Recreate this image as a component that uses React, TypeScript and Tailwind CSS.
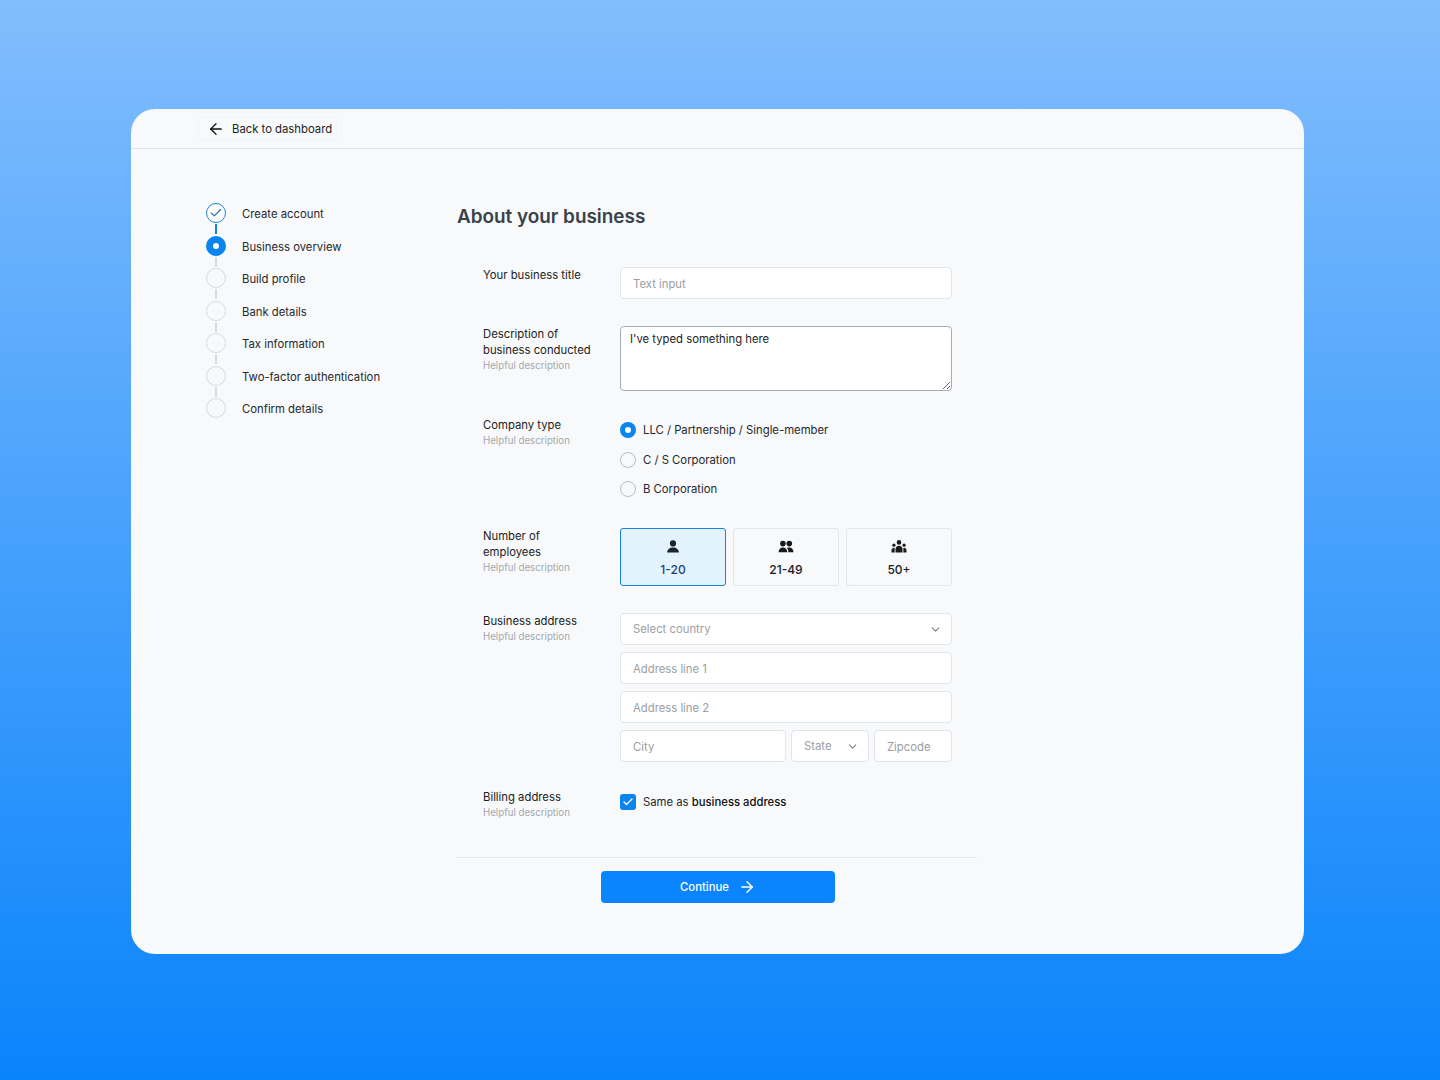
import { ArrowLeft, ArrowRight, Check, ChevronDown } from 'lucide-react';

const steps = [
  'Create account',
  'Business overview',
  'Build profile',
  'Bank details',
  'Tax information',
  'Two-factor authentication',
  'Confirm details',
];

const inputClass =
  'h-8 min-w-0 rounded-[4px] border border-[#e1e4e8] bg-white px-3 pt-px text-[11.3px] text-[#222] placeholder:text-[#9a9ea3] outline-none';

function PersonIcon() {
  return (
    <svg width="18" height="18" viewBox="0 0 18 18" fill="currentColor">
      <circle cx="9" cy="5.4" r="3.1" />
      <path d="M3.1 14.6c0-3.100 2.700-5.100 5.900-5.100s5.900 2 5.900 5.100z" />
    </svg>
  );
}

function PeopleIcon() {
  return (
    <svg width="18" height="18" viewBox="0 0 18 18" fill="currentColor">
      <circle cx="5.9" cy="5.6" r="2.8" />
      <circle cx="12.3" cy="5.6" r="2.8" />
      <path d="M1.6 14.2c0-2.800 1.900-4.600 4.300-4.600s4.400 1.800 4.400 4.600z" />
      <path d="M11.400 14.200c0-1.800-.5-3.300-1.500-4.300.7-.2 1.500-.3 2.400-.3 2.400 0 4.200 1.800 4.200 4.600z" />
    </svg>
  );
}

function GroupIcon() {
  return (
    <svg width="18" height="18" viewBox="0 0 18 18" fill="currentColor">
      <circle cx="9" cy="4.4" r="2.3" />
      <circle cx="3.9" cy="7.2" r="1.6" />
      <circle cx="14.1" cy="7.2" r="1.6" />
      <path d="M5.500 14.400v-3.200c0-2 1.500-3.400 3.500-3.400s3.500 1.400 3.500 3.400v3.200z" />
      <path d="M1.500 14.400v-1.800c0-1.700 1-2.800 2.500-2.800.2 0 .4 0 .6.100v4.500z" />
      <path d="M16.500 14.400v-1.800c0-1.700-1-2.800-2.500-2.800-.2 0-.4 0-.6.100v4.500z" />
    </svg>
  );
}

function StepDot({ index }: { index: number }) {
  if (index === 0) {
    return (
      <div className="flex size-5 shrink-0 items-center justify-center rounded-full border-[1.5px] border-[#1f7fd6] bg-white">
        <Check size={14} strokeWidth={2} className="text-[#1f6fb8]" />
      </div>
    );
  }
  if (index === 1) {
    return (
      <div className="flex size-5 shrink-0 items-center justify-center rounded-full bg-[#0a84ee]">
        <div className="size-[6px] rounded-full bg-white" />
      </div>
    );
  }
  return <div className="size-5 shrink-0 rounded-full border-[1.5px] border-[#d8dbdf]" />;
}

function Stepper() {
  return (
    <div className="w-[326px] shrink-0 pl-[75px] pt-[54px]">
      {steps.map((step, i) => (
        <div key={step}>
          <div className="flex h-5 items-center gap-4">
            <StepDot index={i} />
            <span className="whitespace-nowrap pt-[3px] text-[11.3px] text-[#26282b]">{step}</span>
          </div>
          {i < steps.length - 1 && (
            <div
              className={`my-[1.25px] ml-[9.25px] h-[10px] w-[1.5px] ${i === 0 ? 'bg-[#1f7fd6]' : 'bg-[#d8dbdf]'}`}
            />
          )}
        </div>
      ))}
    </div>
  );
}

function FieldLabel({ title, hint = true }: { title: React.ReactNode; hint?: boolean }) {
  return (
    <div className="w-[137px] shrink-0">
      <div className="text-[11.3px] leading-4 text-[#222]">{title}</div>
      {hint && <div className="text-[9.7px] leading-[15px] text-[#a5a8ac]">Helpful description</div>}
    </div>
  );
}

function Radio({ label, checked }: { label: string; checked?: boolean }) {
  return (
    <label className="flex h-4 items-center gap-[7px] text-[11.3px] text-[#26282b]">
      {checked ? (
        <span className="flex size-4 items-center justify-center rounded-full bg-[#0a84ee]">
          <span className="size-[6px] rounded-full bg-white" />
        </span>
      ) : (
        <span className="size-4 rounded-full border border-[#b9bcc0]" />
      )}
      <span className="pt-px">{label}</span>
    </label>
  );
}

function SizeCard({ label, icon, active }: { label: string; icon: React.ReactNode; active?: boolean }) {
  return (
    <div
      className={`flex h-[58px] flex-1 flex-col items-center rounded-[3px] pt-[9px] text-xs font-medium ${
        active
          ? 'border-[1.5px] border-[#1a80d8] bg-[#e3f3fd] text-[#1b3f80]'
          : 'border border-[#e4e6e9] bg-[#f7f9fb] text-[#1a1a1a]'
      }`}
    >
      <span className={active ? 'text-[#1a2430]' : 'text-[#1a1a1a]'}>{icon}</span>
      <span className="mt-[6px] leading-4">{label}</span>
    </div>
  );
}

function SelectBox({ label, className }: { label: string; className: string }) {
  return (
    <div
      className={`flex h-8 items-center justify-between rounded-[4px] border border-[#e1e4e8] bg-white pl-3 pr-[9px] text-[11.3px] text-[#9a9ea3] ${className}`}
    >
      <span className="pt-px">{label}</span>
      <ChevronDown size={13} strokeWidth={2} className="text-[#7d8186]" />
    </div>
  );
}

export default function App() {
  return (
    <div
      className="h-[1080px] w-full overflow-hidden bg-[linear-gradient(180deg,#82bdfd_0%,#0a84fb_100%)] pl-[131px] pt-[109px]"
      style={{ fontFamily: 'Inter, "Liberation Sans", sans-serif' }}
    >
      <div className="h-[845px] w-[1173px] overflow-hidden rounded-[24px] bg-[#f7f9fb]">
        <div className="flex h-10 items-center border-b border-[#e1e3e6] pl-[67px]">
          <button className="flex h-6 w-[144px] items-center gap-[7px] rounded-[3px] border border-[#f3f4f6] pl-[8px] text-[11.3px] text-[#222]">
            <ArrowLeft size={18} strokeWidth={1.75} className="text-[#111]" />
            <span className="pt-[2px]">Back to dashboard</span>
          </button>
        </div>

        <div className="flex">
          <Stepper />

          <div className="w-[520px] shrink-0 pt-[54px]">
            <h1 className="text-[18.9px] font-semibold leading-7 text-[#39424a]">About your business</h1>

            <div className="mt-[36px] flex flex-col gap-[27px] pl-[26px]">
              <div className="flex">
                <FieldLabel title="Your business title" hint={false} />
                <input className={`${inputClass} w-[332px]`} placeholder="Text input" />
              </div>

              <div className="flex">
                <FieldLabel
                  title={
                    <>
                      Description of
                      <br />
                      business conducted
                    </>
                  }
                />
                <textarea
                  className="h-[65px] w-[332px] rounded-[4px] border border-[#a9adb2] bg-white px-[9px] py-[4px] text-[11.3px] leading-4 text-[#222] outline-none"
                  defaultValue="I've typed something here"
                />
              </div>

              <div className="-mt-px flex h-[84px]">
                <FieldLabel title="Company type" />
                <div className="flex flex-col gap-[13.5px] pt-[5px]">
                  <Radio label="LLC / Partnership / Single-member" checked />
                  <Radio label="C / S Corporation" />
                  <Radio label="B Corporation" />
                </div>
              </div>

              <div className="flex">
                <FieldLabel
                  title={
                    <>
                      Number of
                      <br />
                      employees
                    </>
                  }
                />
                <div className="flex w-[332px] gap-[7px]">
                  <SizeCard label="1-20" icon={<PersonIcon />} active />
                  <SizeCard label="21-49" icon={<PeopleIcon />} />
                  <SizeCard label="50+" icon={<GroupIcon />} />
                </div>
              </div>

              <div className="flex">
                <FieldLabel title="Business address" />
                <div className="flex w-[332px] flex-col gap-[7px]">
                  <SelectBox label="Select country" className="w-full" />
                  <input className={`${inputClass} w-full`} placeholder="Address line 1" />
                  <input className={`${inputClass} w-full`} placeholder="Address line 2" />
                  <div className="flex gap-[5px]">
                    <input className={`${inputClass} w-[166px]`} placeholder="City" />
                    <SelectBox label="State" className="w-[78px]" />
                    <input className={`${inputClass} w-[78px]`} placeholder="Zipcode" />
                  </div>
                </div>
              </div>

              <div className="flex">
                <FieldLabel title="Billing address" />
                <div className="flex items-center gap-[7px] self-start pt-[4px] text-[11.3px] text-[#26282b]">
                  <span className="flex size-4 items-center justify-center rounded-[3px] bg-[#0a84ee]">
                    <Check size={12} strokeWidth={2.5} className="text-white" />
                  </span>
                  <span className="pt-px">
                    Same as <span className="font-medium text-[#111]">business address</span>
                  </span>
                </div>
              </div>
            </div>

            <div className="mt-[37px] border-t border-[#e6e8eb] pt-[13px]">
              <button className="ml-[144px] flex h-8 w-[234px] items-center justify-center gap-[9px] rounded-[4px] bg-[#0a84ff] text-[11.3px] font-medium text-white">
                Continue
                <ArrowRight size={18} strokeWidth={2} />
              </button>
            </div>
          </div>
        </div>
      </div>
    </div>
  );
}
